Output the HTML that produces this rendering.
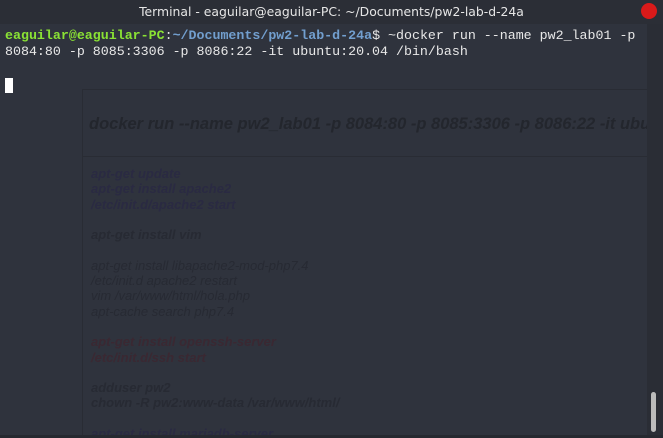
<!DOCTYPE html>
<html><head><style>
body{margin:0;width:663px;height:438px;overflow:hidden;background:#2f333d;position:relative;font-family:"Liberation Sans",sans-serif}
#tb{position:absolute;left:0;top:0;width:663px;height:24px;background:#2b2e36;color:#e6e6e6;font-size:12.4px;line-height:24px;text-align:center;font-family:"DejaVu Sans",sans-serif}
#red{position:absolute;left:641px;top:3px;width:16px;height:16px;border-radius:50%;background:#d91a1a}
#term{position:absolute;left:0;top:24px;width:647px;height:411px;background:#2f333d}
#sb{position:absolute;left:647px;top:24px;width:16px;height:414px;background:#2a2d35}
#thumb{position:absolute;left:651px;top:392px;width:5px;height:40px;background:#bbb;border-radius:3px}
#bot{position:absolute;left:0;top:435px;width:663px;height:3px;background:#262930}
#box{position:absolute;left:82px;top:89px;width:565px;height:346px;border-left:1px solid #292c34;border-top:1px solid #292c34;overflow:hidden}
#box .h{position:absolute;left:6px;top:25px;font:italic bold 16.5px "Liberation Sans",sans-serif;color:#23262d;white-space:nowrap}
#box .hr{position:absolute;left:0;top:66px;width:565px;border-top:1px solid #292c34}
#box .b{position:absolute;left:8px;top:76px;font:italic 13px/15.3px "Liberation Sans",sans-serif;color:#272a33;white-space:pre}
.bb{font-weight:bold}
.pp{color:#2a2a42}
.rr{color:#3a2832}
#txt{position:absolute;left:5px;top:28px;font:13.3px/16px "Liberation Mono",monospace;color:#e8e8e8;white-space:pre}
.g{color:#8ae234;font-weight:bold}.bl{color:#729fcf;font-weight:bold}
#cur{position:absolute;left:5px;top:78px;width:8px;height:15px;background:#fff}
</style></head><body>
<div id="tb">Terminal - eaguilar@eaguilar-PC: ~/Documents/pw2-lab-d-24a</div>
<div id="red"></div>
<div id="term"></div>
<div id="box"><div class="h">docker run --name pw2_lab01 -p 8084:80 -p 8085:3306 -p 8086:22 -it ubuntu:20.04</div><div class="hr"></div>
<div class="b"><span class="bb pp">apt-get update
apt-get install apache2
/etc/init.d/apache2 start</span>

<span class="bb">apt-get install vim</span>

apt-get install libapache2-mod-php7.4
/etc/init.d apache2 restart
vim /var/www/html/hola.php
apt-cache search php7.4

<span class="bb rr">apt-get install openssh-server
/etc/init.d/ssh start</span>

<span class="bb">adduser pw2
chown -R pw2:www-data /var/www/html/</span>

<span class="bb pp">apt-get install mariadb-server</span></div></div>
<div id="sb"></div><div id="thumb"></div><div id="bot"></div>
<div id="txt"><span class="g">eaguilar@eaguilar-PC</span>:<span class="bl">~/Documents/pw2-lab-d-24a</span>$ ~docker run --name pw2_lab01 -p
8084:80 -p 8085:3306 -p 8086:22 -it ubuntu:20.04 /bin/bash</div>
<div id="cur"></div>
</body></html>
